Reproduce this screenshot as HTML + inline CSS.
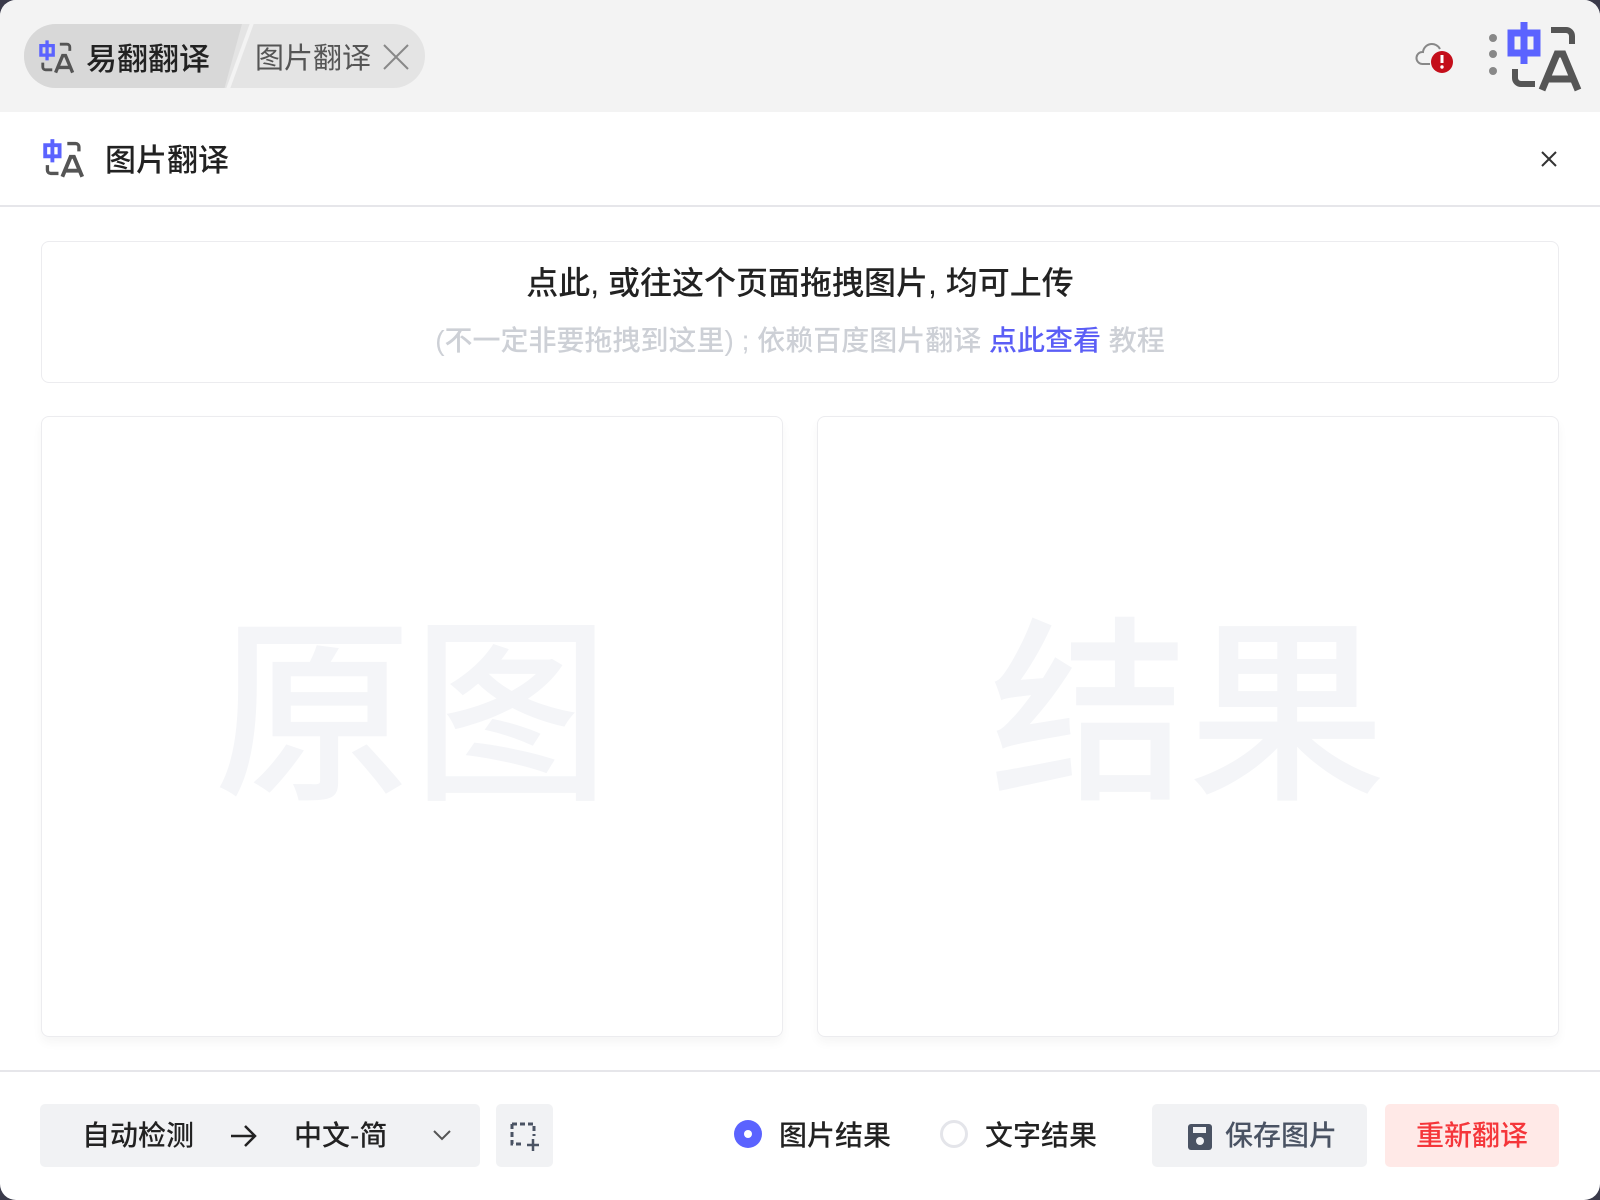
<!DOCTYPE html>
<html><head><meta charset="utf-8"><style>
*{box-sizing:border-box;margin:0;padding:0}
html,body{width:1600px;height:1200px;overflow:hidden;background:#3a3a4a}
body{font-family:"Liberation Sans","Noto Sans CJK SC",sans-serif;color:#222}
#win{position:absolute;left:0;top:0;width:1600px;height:1200px;background:#fff;border-radius:16px;overflow:hidden}
#bar{position:absolute;left:0;top:0;width:1600px;height:112px;background:#f3f3f3}
#pill{position:absolute;left:24px;top:24px;width:401px;height:64px;border-radius:32px;background:#e4e4e4;overflow:hidden}
#pill .act{position:absolute;left:0;top:0;width:218px;height:64px;background:#d8d8d8;clip-path:polygon(0 0,100% 0,92% 100%,0 100%)}
#pill .sep{position:absolute;left:214px;top:0;width:4px;height:64px;background:#f3f3f3;transform:skewX(-20deg)}
.t{position:absolute;white-space:nowrap;font-weight:500}
#hdr{position:absolute;left:0;top:112px;width:1600px;height:95px;border-bottom:2px solid #e6e6ea}
#up{position:absolute;left:41px;top:241px;width:1518px;height:142px;border:1.5px solid #ececef;border-radius:8px}
.panel{position:absolute;top:416px;width:742px;height:621px;border:1.5px solid #ececef;border-radius:8px;box-shadow:0 6px 10px rgba(0,0,0,0.04)}
.wm{position:absolute;left:0;right:0;top:200px;text-align:center;font-size:198px;color:#f4f5f8;line-height:1;font-weight:500}
#foot{position:absolute;left:0;top:1070px;width:1600px;height:2px;background:#e6e6ea}
.btn{position:absolute;top:1104px;height:63px;background:#f1f2f4;border-radius:5px}
</style></head><body><div id="win">
<svg width="0" height="0" style="position:absolute"><defs>
<g id="logo">
  <path d="M4 11h26v20H4z" fill="none" stroke="#5b63ff" stroke-width="7"/>
  <path d="M17 0v42" stroke="#5b63ff" stroke-width="7"/>
  <path d="M44 8h15a6 6 0 0 1 6 6v8" fill="none" stroke="#555" stroke-width="6"/>
  <path d="M8 47v9a6 6 0 0 0 6 6h14" fill="none" stroke="#555" stroke-width="6"/>
  <path d="M35 68l15-36h6l15 36M41 57h24" fill="none" stroke="#555" stroke-width="7"/>
</g></defs></svg>
<div id="bar">
 <div id="pill"><div class="act"></div><div class="sep"></div>
  <svg style="position:absolute;left:15px;top:16px" width="36" height="34" viewBox="0 0 76 70"><use href="#logo"/></svg>
  <div class="t" style="left:62px;top:10px;font-size:31px;color:#222">易翻翻译</div>
  <div class="t" style="left:231px;top:11px;font-size:29px;color:#555;font-weight:400">图片翻译</div>
  <svg style="position:absolute;left:359px;top:20px" width="26" height="26"><path d="M1 1L25 25M25 1L1 25" stroke="#888" stroke-width="2"/></svg>
 </div>
 <svg style="position:absolute;left:1414px;top:38px" width="42" height="36" viewBox="0 0 42 36">
  <path d="M8 26a6 6 0 0 1 1-12a9 9 0 0 1 17-3" fill="none" stroke="#888" stroke-width="2"/>
  <path d="M8 26h8" stroke="#888" stroke-width="2"/>
  <circle cx="28" cy="24" r="11" fill="#c40e1a"/>
  <path d="M28 17v8" stroke="#fff" stroke-width="3"/><circle cx="28" cy="29" r="1.7" fill="#fff"/>
 </svg>
 <div style="position:absolute;left:1489px;top:34px;width:8px;height:8px;border-radius:4px;background:#888"></div>
 <div style="position:absolute;left:1489px;top:50px;width:8px;height:8px;border-radius:4px;background:#888"></div>
 <div style="position:absolute;left:1489px;top:67px;width:8px;height:8px;border-radius:4px;background:#888"></div>
 <svg style="position:absolute;left:1507px;top:22px" width="76" height="70" viewBox="0 0 76 70"><use href="#logo"/></svg>
</div>
<div id="hdr">
 <svg style="position:absolute;left:43px;top:27px" width="42" height="39" viewBox="0 0 76 70"><use href="#logo"/></svg>
 <div class="t" style="left:105px;top:23px;font-size:31px;color:#222">图片翻译</div>
 <svg style="position:absolute;left:1541px;top:39px" width="16" height="16"><path d="M1 1L15 15M15 1L1 15" stroke="#333" stroke-width="2"/></svg>
</div>
<div id="up">
 <div class="t" style="left:0;right:0;top:16px;text-align:center;font-size:32px;color:#222">点此, 或往这个页面拖拽图片, 均可上传</div>
 <div class="t" style="left:0;right:0;top:77px;text-align:center;font-size:28px;color:#cdd0d6">(不一定非要拖拽到这里) ; 依赖百度图片翻译 <span style="color:#5b5ef6">点此查看</span> 教程</div>
</div>
<div class="panel" style="left:41px"><div class="wm">原图</div></div>
<div class="panel" style="left:817px"><div class="wm">结果</div></div>
<div id="foot"></div>
<div class="btn" style="left:40px;width:440px">
 <div class="t" style="left:42px;top:10px;font-size:28px;color:#222">自动检测</div>
 <svg style="position:absolute;left:190px;top:20px" width="28" height="24"><path d="M1 12h24M15 2l10 10-10 10" fill="none" stroke="#222" stroke-width="2.5"/></svg>
 <div class="t" style="left:254px;top:10px;font-size:28px;color:#222">中文-简</div>
 <svg style="position:absolute;left:393px;top:26px" width="18" height="12"><path d="M1 1l8 8 8-8" fill="none" stroke="#555" stroke-width="2"/></svg>
</div>
<div class="btn" style="left:496px;width:57px">
 <svg style="position:absolute;left:14px;top:18px" width="30" height="30" viewBox="0 0 30 30"><path d="M2 2h22v12M2 2v20h12" fill="none" stroke="#4a5363" stroke-width="3" stroke-dasharray="5 3"/><path d="M23 17v12M17 23h12" stroke="#4a5363" stroke-width="2.5"/></svg>
</div>
<div style="position:absolute;left:734px;top:1120px;width:28px;height:28px;border-radius:14px;background:#5b63ff"><div style="position:absolute;left:10px;top:10px;width:8px;height:8px;border-radius:4px;background:#fff"></div></div>
<div class="t" style="left:779px;top:1114px;font-size:28px;color:#222">图片结果</div>
<div style="position:absolute;left:940px;top:1120px;width:28px;height:28px;border-radius:14px;border:3px solid #e4e5ea"></div>
<div class="t" style="left:985px;top:1114px;font-size:28px;color:#222">文字结果</div>
<div class="btn" style="left:1152px;width:215px">
 <svg style="position:absolute;left:36px;top:20px" width="24" height="26" viewBox="0 0 24 26"><rect x="0" y="0" width="24" height="26" rx="3" fill="#4a5363"/><rect x="5" y="3" width="13" height="6" fill="#f1f2f4"/><circle cx="12" cy="17" r="4" fill="#f1f2f4"/></svg>
 <div class="t" style="left:73px;top:10px;font-size:28px;color:#4a5363">保存图片</div>
</div>
<div class="btn" style="left:1385px;width:174px;background:#ffe9e7">
 <div class="t" style="left:0;right:0;text-align:center;top:10px;font-size:28px;color:#f5363a">重新翻译</div>
</div>
</div></body></html>
